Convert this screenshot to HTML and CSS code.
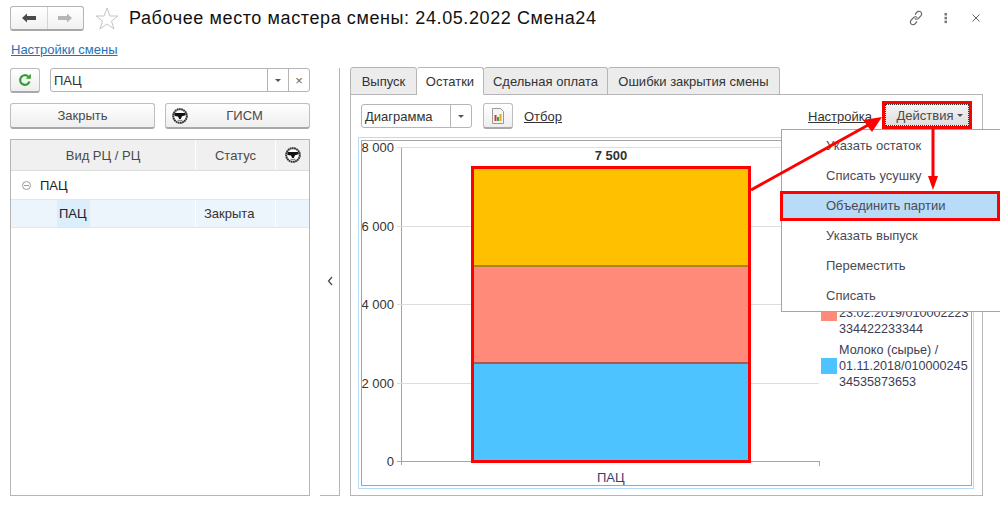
FILE: index.html
```html
<!DOCTYPE html>
<html lang="ru">
<head>
  <meta charset="UTF-8" />
  <meta name="viewport" content="width=device-width, initial-scale=1" />
  <title>Рабочее место мастера смены</title>
  <link rel="stylesheet" href="styles.css">
</head>
<body>

<svg class="defs" width="0" height="0">
  <symbol id="gism" viewBox="0 0 16 16">
    <circle cx="8" cy="8" r="6.800" fill="#fff" stroke="#333" stroke-width="2" stroke-dasharray="1.800 .4"/>
    <path d="M2.500 5h11v2.200l-3.500 1-1.200 2.800H7.200L6 8.500 2.500 8z" fill="#111"/>
    <path d="M5.500 12.300h5" stroke="#777" stroke-width="1"/>
  </symbol>
</svg>

<header class="top">
  <div class="nav-group">
    <button class="nav-btn">
      <svg width="14" height="10" viewBox="0 0 14 10"><path d="M0 5l5-4.500V3h9v4H5v2.500z" fill="#4a4a4a"/></svg>
    </button>
    <button class="nav-btn">
      <svg width="14" height="10" viewBox="0 0 14 10"><path d="M14 5L9 .5V3H0v4h9v2.500z" fill="#b5b5b5"/></svg>
    </button>
  </div>
  <svg class="star" width="24" height="23" viewBox="0 0 24 23"><path d="M12 1l3 8h8l-6.500 5 2.500 8-7-5-7 5 2.500-8L1 9h8z" fill="#fff" stroke="#c4c4c4"/></svg>
  <h1>Рабочее место мастера смены: 24.05.2022 Смена24</h1>
  <div class="win-icons">
    <svg width="16" height="16" viewBox="0 0 16 16" fill="none" stroke="#666" stroke-width="1.200"><path d="M7 4.500l2-2.300a2.600 2.600 0 0 1 4 3.400l-2.500 2.800a2.600 2.600 0 0 1-3.800 0"/><path d="M9 11.500l-2 2.300a2.600 2.600 0 0 1-4-3.400l2.500-2.800a2.600 2.600 0 0 1 3.800 0"/></svg>
    <svg width="16" height="16" viewBox="0 0 16 16" fill="#777"><rect x="6.500" y="3" width="2.500" height="2.500"/><rect x="6.500" y="6.800" width="2.500" height="2.500"/><rect x="6.500" y="10.600" width="2.500" height="2.500"/></svg>
    <svg width="16" height="16" viewBox="0 0 16 16" stroke="#666" stroke-width="1"><path d="M4.500 4.500l7 7M11.500 4.500l-7 7"/></svg>
  </div>
</header>

<a class="settings-link" href="#">Настройки смены</a>

<main class="workspace">
  <section class="left">
    <div class="filter-row">
      <button class="btn refresh">
        <svg width="14" height="14" viewBox="0 0 14 14" fill="none"><path d="M11.500 8.500a4.800 4.800 0 1 1-1.300-5" stroke="#2f9e2f" stroke-width="2.200"/><path d="M12.800 .8v5h-5z" fill="#2f9e2f"/></svg>
      </button>
      <div class="combo">
        <span class="combo-text">ПАЦ</span>
        <span class="combo-cell"><i class="caret"></i></span>
        <span class="combo-cell clear">×</span>
      </div>
    </div>
    <div class="btn-row">
      <button class="btn">Закрыть</button>
      <button class="btn gism-btn">
        <svg width="16" height="16"><use href="#gism"/></svg>
        <span>ГИСМ</span>
      </button>
    </div>
    <div class="table">
      <div class="row head">
        <div class="cell c1">Вид РЦ / РЦ</div>
        <div class="cell c2">Статус</div>
        <div class="cell c3"><svg width="16" height="16"><use href="#gism"/></svg></div>
      </div>
      <div class="row group">
        <span class="collapse"></span>ПАЦ
      </div>
      <div class="row selected">
        <div class="cell c1"><span class="cur">ПАЦ</span></div>
        <div class="cell c2">Закрыта</div>
        <div class="cell c3"></div>
      </div>
    </div>
  </section>

  <div class="splitter">
    <svg width="6" height="10" viewBox="0 0 6 10" fill="none" stroke="#444" stroke-width="1.200"><path d="M5 1L1.500 5 5 9"/></svg>
  </div>

  <section class="right">
    <div class="tabs">
      <div class="tab t1">Выпуск</div>
      <div class="tab t2 active">Остатки</div>
      <div class="tab t3">Сдельная оплата</div>
      <div class="tab t4">Ошибки закрытия смены</div>
    </div>
    <div class="panel">
      <div class="toolbar">
        <div class="combo view-combo">
          <span class="combo-text">Диаграмма</span>
          <span class="combo-cell"><i class="caret"></i></span>
        </div>
        <button class="btn chart-btn">
          <svg width="14" height="16" viewBox="0 0 14 16"><path d="M1.500 .5h8l3 3v12h-11z" fill="#f4f4f4" stroke="#999"/><rect x="3.500" y="7" width="2" height="6" fill="#d9342b"/><rect x="6" y="9" width="2" height="4" fill="#3aa23a"/><rect x="8.500" y="6" width="2" height="7" fill="#d9a92b"/></svg>
        </button>
        <a class="plain-link" href="#">Отбор</a>
        <a class="plain-link setup" href="#">Настройка</a>
        <button class="actions"><span class="actions-in">Действия <i class="caret"></i></span></button>
      </div>

      <div class="chart-frame">
        <div class="chart">
          <div class="axis-y"></div>
          <div class="axis-x"></div>
          <div class="axis-end"></div>
          <div class="grid g8"><span>8 000</span></div>
          <div class="grid g6"><span>6 000</span></div>
          <div class="grid g4"><span>4 000</span></div>
          <div class="grid g2"><span>2 000</span></div>
          <div class="grid g0"><span>0</span></div>
          <div class="bar-total">7 500</div>
          <div class="bar">
            <div class="seg yellow"></div>
            <div class="seg salmon"></div>
            <div class="seg blue"></div>
          </div>
          <div class="cat">ПАЦ</div>
          <div class="legend">
            <div class="legend-item">
              <i class="swatch salmon"></i>
              <span>Молоко (сырье) /<br>23.02.2019/010002223<br>334422233344</span>
            </div>
            <div class="legend-item">
              <i class="swatch blue"></i>
              <span>Молоко (сырье) /<br>01.11.2018/010000245<br>34535873653</span>
            </div>
          </div>
        </div>
      </div>
    </div>
  </section>
</main>

<ul class="menu">
  <li>Указать остаток</li>
  <li>Списать усушку</li>
  <li class="hl">Объединить партии</li>
  <li>Указать выпуск</li>
  <li>Переместить</li>
  <li>Списать</li>
</ul>

<svg class="arrows" width="1000" height="506" viewBox="0 0 1000 506">
  <path d="M751 190L870 124" stroke="#f00" stroke-width="3" fill="none"/>
  <path d="M882 117L863 120 872 132z" fill="#f00"/>
  <path d="M933 129V178" stroke="#f00" stroke-width="3" fill="none"/>
  <path d="M933 190L928 176h10z" fill="#f00"/>
</svg>

</body>
</html>
```

FILE: styles.css
```css
* {
  box-sizing: border-box;
}
html, body {
  height: 100%;
}
body {
  font-family: "Liberation Sans", Arial, sans-serif;
  font-size: 13px;
  color: #333;
  background-color: #fff;
  margin: 0;
  height: 506px;
  overflow: hidden;
  position: relative;
}
.defs {
  position: absolute;
}
button {
  font: inherit;
  color: #4a4a4a;
  padding: 0;
}

/* header */
.top {
  display: flex;
  align-items: center;
  height: 36px;
  padding: 0 16px 0 10px;
}
.nav-group {
  display: flex;
  width: 74px;
  height: 25px;
  margin-top: 1px;
  border: 1px solid #b5b5b5;
  border-bottom: 2px solid #a8a8a8;
  border-radius: 3px;
  background: linear-gradient(#fff, #f1f1f1);
}
.nav-btn {
  flex: 1;
  border: 0;
  background: none;
  display: flex;
  align-items: center;
  justify-content: center;
}
.nav-btn + .nav-btn {
  border-left: 1px solid #d4d4d4;
}
.star {
  margin-left: 11px;
}
h1 {
  font-size: 18px;
  letter-spacing: .6px;
  font-weight: normal;
  color: #111;
  margin: 0 0 0 10px;
}
.win-icons {
  margin-left: auto;
  display: flex;
  gap: 14px;
}
.settings-link {
  display: block;
  margin: 5px 0 0 11px;
  height: 17px;
  line-height: 17px;
  color: #2a6fb5;
}

/* layout */
.workspace {
  display: flex;
  margin-top: 10px;
  padding-left: 10px;
  height: 428px;
}
.left {
  width: 300px;
  display: flex;
  flex-direction: column;
}
.filter-row {
  display: flex;
  gap: 10px;
  height: 25px;
}
.btn {
  border: 1px solid #bdbdbd;
  border-bottom: 2px solid #a8a8a8;
  border-radius: 3px;
  background: linear-gradient(#fff, #eeeeee);
}
.refresh {
  width: 30px;
  display: flex;
  align-items: center;
  justify-content: center;
}
.combo {
  display: flex;
  align-items: center;
  flex: 1;
  height: 24px;
  border: 1px solid #b5b5b5;
  border-radius: 3px;
  color: #333;
}
.combo-text {
  flex: 1;
  padding-left: 3px;
}
.combo-cell {
  width: 21px;
  height: 100%;
  border-left: 1px solid #b5b5b5;
  display: flex;
  align-items: center;
  justify-content: center;
}
.clear {
  color: #666;
}
.caret {
  display: inline-block;
  width: 0;
  height: 0;
  border: 3px solid transparent;
  border-top: 3px solid #555;
  border-bottom: 0;
}
.btn-row {
  display: flex;
  gap: 10px;
  margin-top: 10px;
  height: 26px;
}
.btn-row .btn {
  flex: 1 1 0;
}
.gism-btn {
  display: flex;
  align-items: center;
}
.gism-btn svg {
  margin-left: 6px;
}
.gism-btn span {
  flex: 1;
  padding-right: 8px;
}

/* table */
.table {
  flex: 1;
  margin-top: 10px;
  border: 1px solid #b5b5b5;
}
.row {
  display: flex;
}
.cell {
  display: flex;
  align-items: center;
}
.c1 {
  width: 184px;
}
.c2 {
  width: 79px;
  margin-left: 1px;
}
.c3 {
  flex: 1;
  margin-left: 1px;
  justify-content: center;
}
.head {
  height: 31px;
  border-bottom: 1px solid #dcdcdc;
  color: #4a4a4a;
}
.head .cell {
  background-color: #f0f0f0;
  justify-content: center;
}
.group {
  height: 29px;
  align-items: center;
  padding-left: 11px;
  border-bottom: 1px solid #e6e6e6;
  color: #222;
}
.collapse {
  width: 9px;
  height: 9px;
  margin-right: 9px;
  border: 1px solid #999;
  border-radius: 50%;
  background: linear-gradient(#999, #999) center / 5px 1px no-repeat;
}
.selected {
  height: 28px;
  border-bottom: 1px solid #e6e6e6;
}
.selected .cell {
  background-color: #edf5fc;
}
.selected .c1 {
  padding-left: 46px;
}
.cur {
  display: flex;
  align-items: center;
  width: 33px;
  height: 100%;
  padding-left: 2px;
  background-color: #dcedfb;
  color: #222;
}
.selected .c2 {
  padding-left: 8px;
}

/* splitter */
.splitter {
  width: 20px;
  margin-left: 10px;
  border-right: 1px solid #b5b5b5;
  border-bottom: 1px solid #b5b5b5;
  display: flex;
  align-items: center;
  justify-content: center;
  padding-bottom: 1px;
}

/* right part */
.right {
  width: 633px;
  margin-left: 10px;
  display: flex;
  flex-direction: column;
}
.tabs {
  display: flex;
  height: 28px;
  margin-top: -1px;
  position: relative;
  z-index: 1;
}
.tab {
  display: flex;
  align-items: center;
  justify-content: center;
  border: 1px solid #b5b5b5;
  border-left: 0;
  border-radius: 3px 3px 0 0;
  background-color: #ececec;
  color: #333;
}
.t1 {
  width: 67px;
  border-left: 1px solid #b5b5b5;
}
.t2 {
  width: 67px;
}
.t3 {
  width: 124px;
}
.t4 {
  width: 172px;
}
.tab.active {
  background-color: #fff;
  border-bottom-color: #fff;
}
.panel {
  flex: 1;
  margin-top: -1px;
  border: 1px solid #b5b5b5;
  display: flex;
  flex-direction: column;
}
.toolbar {
  display: flex;
  align-items: center;
  height: 42px;
  padding: 0 10px;
}
.view-combo {
  flex: none;
  width: 111px;
}
.chart-btn {
  width: 30px;
  height: 26px;
  margin-left: 11px;
  display: flex;
  align-items: center;
  justify-content: center;
}
.plain-link {
  color: #333;
  margin-left: 11px;
}
.setup {
  margin-left: auto;
  margin-right: 10px;
}
.actions {
  width: 90px;
  height: 28px;
  margin-bottom: 2px;
  border: 3px solid #f00;
  background: #fff;
}
.actions-in {
  display: flex;
  align-items: center;
  justify-content: center;
  gap: 4px;
  height: 100%;
  padding-left: 6px;
  border: 1px dotted #333;
  background: linear-gradient(#f4f4f4, #dedede);
}

/* chart */
.chart-frame {
  width: 616px;
  height: 352px;
  margin-left: 7px;
  border: 1px solid #b7dcf7;
  padding: 2px;
}
.chart {
  position: relative;
  height: 100%;
  width: 611px;
  border: 1px solid #a5a5a5;
  overflow: hidden;
}
.axis-y {
  position: absolute;
  left: 39px;
  top: 6px;
  height: 318px;
  width: 1px;
  background-color: #a5a5a5;
}
.axis-x {
  position: absolute;
  left: 39px;
  top: 320px;
  width: 418px;
  height: 1px;
  background-color: #a5a5a5;
}
.axis-end {
  position: absolute;
  left: 457px;
  top: 320px;
  width: 1px;
  height: 5px;
  background-color: #a5a5a5;
}
.grid {
  position: absolute;
  left: 35px;
  width: 422px;
  height: 1px;
  background-color: #ddd;
}
.grid span {
  position: absolute;
  right: 425px;
  top: -6px;
  line-height: 14px;
  white-space: nowrap;
  color: #333;
}
.g8 {
  top: 6px;
}
.g6 {
  top: 85px;
}
.g4 {
  top: 163px;
}
.g2 {
  top: 242px;
}
.g0 {
  top: 320px;
  background-color: #a5a5a5;
}
.bar-total {
  position: absolute;
  left: 109px;
  width: 280px;
  top: 7px;
  text-align: center;
  font-weight: bold;
  color: #333;
}
.bar {
  position: absolute;
  left: 109px;
  top: 25px;
  width: 280px;
  height: 297px;
  border: 3px solid #f00;
  display: flex;
  flex-direction: column;
}
.seg {
  flex: 1;
}
.yellow {
  background-color: #ffc000;
  border-bottom: 2px solid #a9822a;
}
.salmon {
  background-color: #ff8a7a;
}
.seg.salmon {
  border-bottom: 2px solid #a85a50;
}
.blue {
  background-color: #4dc3ff;
}
.cat {
  position: absolute;
  left: 235px;
  top: 329px;
  color: #3c3c6e;
}
.legend {
  position: absolute;
  left: 459px;
  top: 148px;
  font-size: 12.600px;
}
.legend-item {
  display: flex;
  align-items: center;
  line-height: 16px;
  margin-bottom: 5px;
  color: #3c3c55;
  white-space: nowrap;
}
.swatch {
  width: 16px;
  height: 16px;
  margin-right: 2px;
}

/* popup */
.menu {
  position: absolute;
  left: 781px;
  top: 129px;
  width: 219px;
  height: 183px;
  margin: 0;
  padding: 1px 0 0;
  list-style: none;
  background-color: #fff;
  border: 1px solid #a5a5a5;
  border-right: 0;
}
.menu li {
  height: 30px;
  line-height: 30px;
  padding-left: 44px;
  color: #4a4a55;
}
.menu .hl {
  margin-left: -2px;
  padding-left: 43px;
  line-height: 24px;
  background-color: #b8dbf8;
  border: 3px solid #f00;
}
.arrows {
  position: absolute;
  left: 0;
  top: 0;
  pointer-events: none;
}
```
